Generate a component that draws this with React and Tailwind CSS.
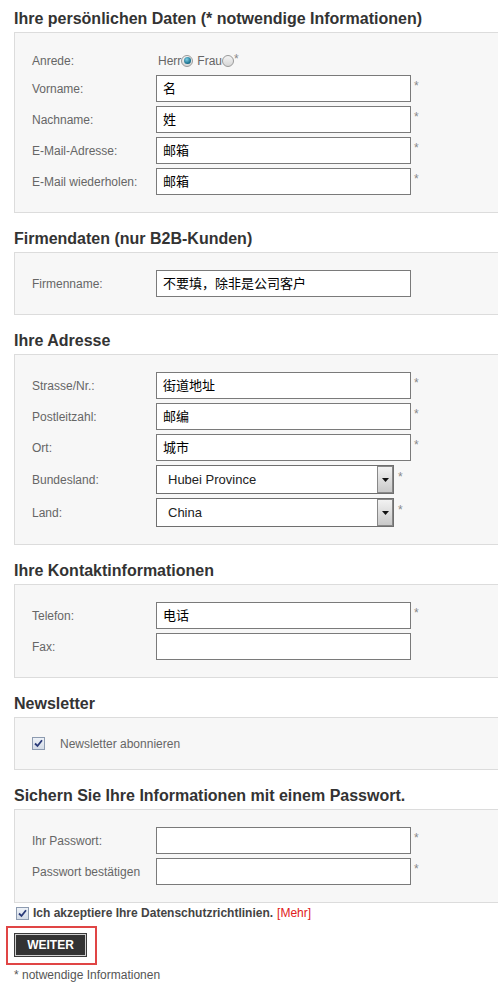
import React from 'react';

const font = "font-['Liberation_Sans','Noto_Sans_CJK_SC',Arial,sans-serif]";

const Check = ({ className = '' }) => (
  <span className={`inline-flex w-[13px] h-[13px] border border-[#8d9bb0] bg-[linear-gradient(#eef2f8,#d3dbe6)] items-center justify-center ${className}`}>
    <svg width="9" height="9" viewBox="0 0 9 9">
      <path d="M1 4.5 L3.5 7 L8 1.2" fill="none" stroke="#2a3a78" strokeWidth="1.8" />
    </svg>
  </span>
);

const Radio = ({ on }) => (
  <span className="inline-flex w-[12px] h-[12px] rounded-full border border-[#9a9a9a] bg-[linear-gradient(#f4f4f4,#d6d6d6)] items-center justify-center">
    {on && <span className="w-[7px] h-[7px] rounded-full bg-[radial-gradient(circle_at_40%_35%,#7fd0e6,#136a88_70%,#0c3f55)]" />}
  </span>
);

const Section = ({ title, children }) => (
  <div className="mt-[16px] first:mt-[9px]">
    <h2 className="pl-[14px] text-[16px] leading-[20px] font-bold text-[#333]">{title}</h2>
    <div className="mt-[3px] ml-[14px] w-[500px] border border-[#dcdcdc] bg-[#f7f7f7] pl-[17px] py-[17px] flex flex-col gap-[4px]">
      {children}
    </div>
  </div>
);

const Field = ({ label, value, star = true }) => (
  <div className="flex items-center h-[27px]">
    <div className="w-[124px] text-[12px] text-[#666]">{label}</div>
    <div className="w-[255px] h-[27px] border border-[#7a7a7a] bg-white flex items-center pl-[6px] text-[13px] text-black">
      {value}
    </div>
    {star && <span className="ml-[3px] -mt-[6px] text-[12px] text-[#888]">*</span>}
  </div>
);

const SelectField = ({ label, value }) => (
  <div className="flex items-center h-[29px]">
    <div className="w-[124px] text-[12px] text-[#666]">{label}</div>
    <div className="w-[238px] h-[29px] border border-[#6f6f6f] bg-white flex items-center">
      <span className="flex-1 pl-[11px] text-[13px] text-[#222]">{value}</span>
      <span className="w-[16px] h-[27px] border border-[#888] bg-[linear-gradient(#f2f2f2,#c9c9c9)] flex items-center justify-center">
        <svg width="7" height="4" viewBox="0 0 7 4">
          <path d="M0 0 H7 L3.5 4 Z" fill="#111" />
        </svg>
      </span>
    </div>
    <span className="ml-[4px] -mt-[6px] text-[12px] text-[#888]">*</span>
  </div>
);

export default function App() {
  return (
    <div className={`w-[498px] min-h-[988px] overflow-hidden bg-white ${font}`}>
      <Section title="Ihre persönlichen Daten (* notwendige Informationen)">
        <div className="flex items-center h-[21px]">
          <div className="w-[124px] text-[12px] text-[#666]">Anrede:</div>
          <div className="pl-[2px] text-[12px] text-[#666] flex items-center">
            Herr<Radio on /> <span className="ml-[4px]">Frau</span><Radio />
            <span className="text-[12px] text-[#888] -mt-[3px]">*</span>
          </div>
        </div>
        <Field label="Vorname:" value="名" />
        <Field label="Nachname:" value="姓" />
        <Field label="E-Mail-Adresse:" value="邮箱" />
        <Field label="E-Mail wiederholen:" value="邮箱" />
      </Section>

      <Section title="Firmendaten (nur B2B-Kunden)">
        <Field label="Firmenname:" value="不要填，除非是公司客户" star={false} />
      </Section>

      <Section title="Ihre Adresse">
        <Field label="Strasse/Nr.:" value="街道地址" />
        <Field label="Postleitzahl:" value="邮编" />
        <Field label="Ort:" value="城市" />
        <SelectField label="Bundesland:" value="Hubei Province" />
        <SelectField label="Land:" value="China" />
      </Section>

      <Section title="Ihre Kontaktinformationen">
        <Field label="Telefon:" value="电话" />
        <Field label="Fax:" value="" star={false} />
      </Section>

      <Section title="Newsletter">
        <div className="flex items-center h-[17px]">
          <Check />
          <span className="ml-[15px] text-[12px] text-[#666]">Newsletter abonnieren</span>
        </div>
      </Section>

      <Section title="Sichern Sie Ihre Informationen mit einem Passwort.">
        <Field label="Ihr Passwort:" value="" />
        <Field label="Passwort bestätigen" value="" />
      </Section>

      <div className="mt-[2px] pl-[16px] h-[16px] flex items-center text-[12px]">
        <Check />
        <span className="ml-[4px] font-bold text-[#444]">Ich akzeptiere Ihre Datenschutzrichtlinien.</span>
        <span className="ml-[4px] text-[#e02020]">[Mehr]</span>
      </div>

      <div className="mt-[5px] ml-[6px] w-[91px] h-[39px] border-2 border-[#e04545] pt-[4px] pl-[6px]">
        <button className="w-[73px] h-[24px] bg-[#333] border border-[#3a3a3a] shadow-[inset_0_0_0_1px_#cfcfcf] text-white text-[12px] font-bold leading-none">
          WEITER
        </button>
      </div>

      <div className="mt-[3px] pl-[14px] text-[12px] leading-[14px] text-[#555]">* notwendige Informationen</div>
    </div>
  );
}
